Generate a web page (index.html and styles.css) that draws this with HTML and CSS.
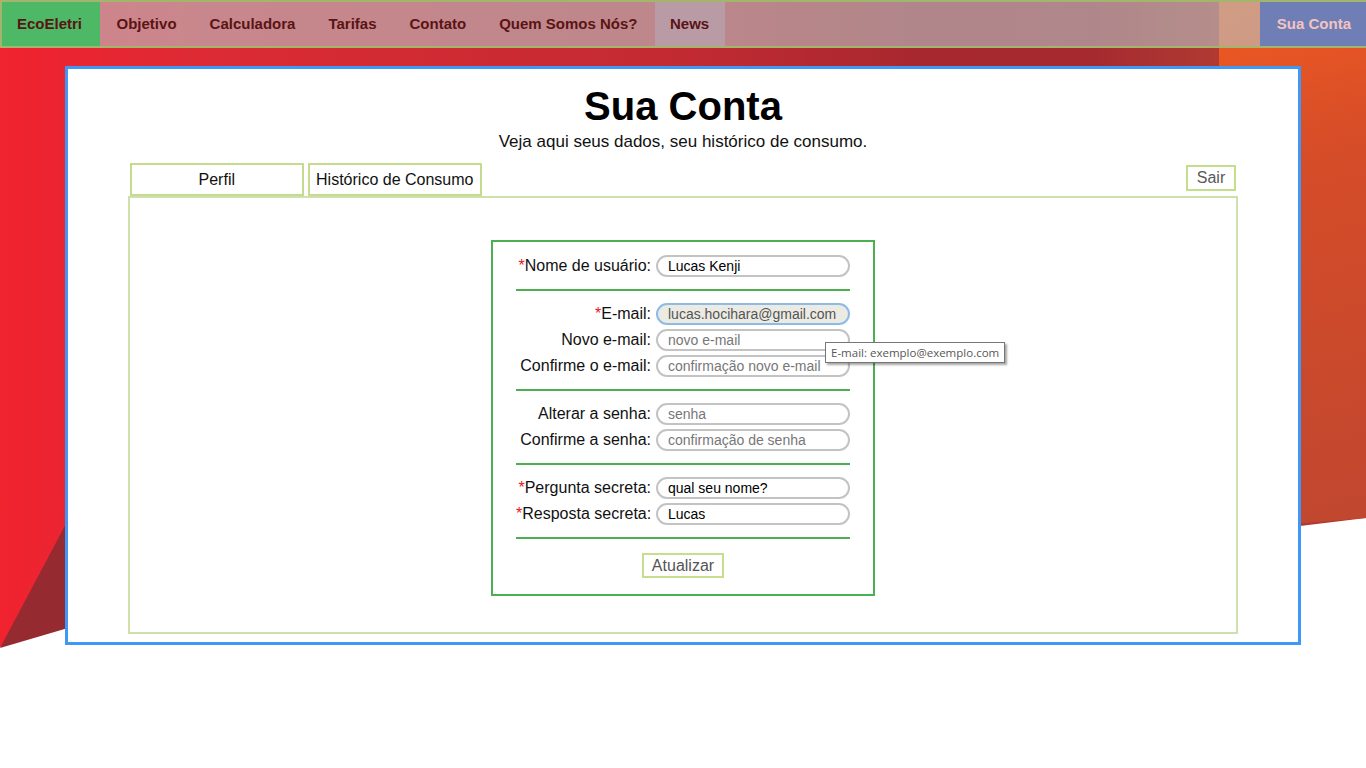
FILE: index.html
```html
<!DOCTYPE html>
<html lang="pt-BR">
<head>
<meta charset="utf-8">
<title>Sua Conta - EcoEletri</title>
<link rel="stylesheet" href="styles.css">
</head>
<body>
<svg class="backdrop" viewBox="0 0 1366 768" preserveAspectRatio="none" aria-hidden="true">
  <defs>
    <linearGradient id="gRed" x1="0" y1="0" x2="1366" y2="0" gradientUnits="userSpaceOnUse">
      <stop offset="0" stop-color="#f0232f"/>
      <stop offset="0.04" stop-color="#ec2431"/>
      <stop offset="0.15" stop-color="#dc2b34"/>
      <stop offset="0.5" stop-color="#c22a32"/>
      <stop offset="0.67" stop-color="#a8282f"/>
      <stop offset="0.8" stop-color="#a52a30"/>
      <stop offset="0.89" stop-color="#b03a32"/>
    </linearGradient>
    <linearGradient id="gOrange" x1="1219" y1="0" x2="1366" y2="500" gradientUnits="userSpaceOnUse">
      <stop offset="0" stop-color="#f05a22"/>
      <stop offset="0.35" stop-color="#d54c28"/>
      <stop offset="1" stop-color="#c2472f"/>
    </linearGradient>
  </defs>
  <polygon points="0,0 1366,0 1366,518 1300,526 66,627 0,647" fill="url(#gRed)"/>
  <polygon points="1219,0 1366,0 1366,518 1219,530" fill="url(#gOrange)"/>
  <polygon points="0,648 68,520 68,628" fill="#952a30"/>
</svg>

<nav class="topnav">
  <a class="nav-link brand" href="#">EcoEletri</a>
  <a class="nav-link" href="#">Objetivo</a>
  <a class="nav-link" href="#">Calculadora</a>
  <a class="nav-link" href="#">Tarifas</a>
  <a class="nav-link" href="#">Contato</a>
  <a class="nav-link" href="#">Quem Somos Nós?</a>
  <a class="nav-link news" href="#">News</a>
  <a class="nav-link account" href="#">Sua Conta</a>
</nav>

<main class="card">
  <h1 class="title">Sua Conta</h1>
  <p class="subtitle">Veja aqui seus dados, seu histórico de consumo.</p>

  <div class="account-box">
    <div class="tabs-row">
      <button class="tab" type="button">Perfil</button>
      <button class="tab" type="button">Histórico de Consumo</button>
      <button class="logout" type="button">Sair</button>
    </div>

    <section class="panel">
      <form class="profile-form">
        <div class="group">
          <label class="label"><span class="req">*</span>Nome de usuário:</label>
          <input class="field" type="text" value="Lucas Kenji">
        </div>
        <div class="sep"></div>
        <div class="group">
          <label class="label"><span class="req">*</span>E-mail:</label>
          <input class="field locked" type="text" value="lucas.hocihara@gmail.com" disabled>
          <label class="label">Novo e-mail:</label>
          <input class="field" type="text" placeholder="novo e-mail">
          <label class="label">Confirme o e-mail:</label>
          <input class="field" type="text" placeholder="confirmação novo e-mail">
        </div>
        <div class="sep"></div>
        <div class="group">
          <label class="label">Alterar a senha:</label>
          <input class="field" type="text" placeholder="senha">
          <label class="label">Confirme a senha:</label>
          <input class="field" type="text" placeholder="confirmação de senha">
        </div>
        <div class="sep"></div>
        <div class="group">
          <label class="label"><span class="req">*</span>Pergunta secreta:</label>
          <input class="field" type="text" value="qual seu nome?">
          <label class="label"><span class="req">*</span>Resposta secreta:</label>
          <input class="field" type="text" value="Lucas">
        </div>
        <div class="sep"></div>
        <div class="actions">
          <button class="submit" type="button">Atualizar</button>
        </div>
      </form>
    </section>
  </div>
</main>

<div class="tooltip">E-mail: exemplo@exemplo.com</div>
</body>
</html>
```

FILE: styles.css
```css
* { box-sizing: border-box; }

html, body {
  margin: 0;
  padding: 0;
}

body {
  position: relative;
  width: 1366px;
  min-height: 768px;
  background: #ffffff;
  font-family: "Liberation Sans", Arial, sans-serif;
  color: #111;
  overflow: hidden;
}

.backdrop {
  position: absolute;
  left: 0;
  top: 0;
  width: 1366px;
  height: 768px;
  z-index: 0;
}

.topnav {
  position: relative;
  z-index: 1;
  display: flex;
  height: 48px;
  border-style: solid;
  border-color: #a3b46c;
  border-width: 2px 0 2px 2px;
  background: rgba(184, 212, 214, 0.55);
}

.nav-link {
  display: block;
  padding: 0 16.5px;
  line-height: 44px;
  font-size: 15px;
  font-weight: bold;
  color: #5a1414;
  text-decoration: none;
  white-space: nowrap;
}

.nav-link.brand {
  background: #4db866;
  padding: 0 18px 0 15px;
}

.nav-link.news {
  background: #b99ba6;
  margin-left: 1px;
  padding: 0 16px 0 15px;
}

.nav-link.account {
  margin-left: auto;
  background: #6f7fb5;
  color: #f3c3c3;
  padding: 0 15px 0 17px;
}

.card {
  position: relative;
  z-index: 1;
  width: 90%;
  margin: 18px auto 0;
  box-sizing: content-box;
  border: 3px solid #3d98f8;
  background: #ffffff;
  padding: 14px 0 8px;
}

.title {
  margin: 0 0 3px;
  font-size: 40px;
  line-height: 46px;
  font-weight: bold;
  text-align: center;
  color: #000;
}

.subtitle {
  margin: 0;
  font-size: 17px;
  line-height: 20px;
  text-align: center;
  color: #111;
}

.account-box {
  width: calc(90% + 4px);
  margin: 11px auto 0;
}

.tabs-row {
  display: flex;
  align-items: flex-start;
  gap: 4px;
  padding: 0 2px;
}

.tab {
  width: 174px;
  height: 33px;
  border: 2px solid #c5dc90;
  background: #fff;
  font-family: "Liberation Sans", Arial, sans-serif;
  font-size: 16px;
  line-height: 28px;
  color: #111;
  padding: 0;
  text-align: center;
}

.logout {
  margin: 2px 0 0 auto;
  height: 26px;
  border: 2px solid #c4df8c;
  background: #fff;
  font-family: "Liberation Sans", Arial, sans-serif;
  font-size: 16px;
  line-height: 18px;
  color: #595959;
  padding: 2px 9px;
}

.panel {
  border: 2px solid #d0e0ac;
  padding: 42px 0 36px;
}

.profile-form {
  width: 384px;
  margin: 0 auto;
  border: 2px solid #4caf50;
  padding: 13px 23px 16px;
}

.group {
  display: grid;
  grid-template-columns: 135px 194px;
  column-gap: 5px;
  row-gap: 4px;
  align-items: center;
}

.label {
  text-align: right;
  font-size: 16px;
  line-height: 18px;
  color: #111;
  white-space: nowrap;
}

.req {
  color: #e8141e;
}

.field {
  width: 194px;
  height: 22px;
  border: 2px solid #c3c3c3;
  border-radius: 11px;
  padding: 0 8px 0 10px;
  font-family: "Liberation Sans", Arial, sans-serif;
  font-size: 14px;
  color: #000;
  background: #fff;
  outline: none;
}

.field::placeholder {
  color: #777;
}

.field.locked {
  background: #ebebe4;
  border-color: #8dbbe8;
  color: #545454;
}

.sep {
  height: 2px;
  background: #4caf50;
  margin: 12px 0;
}

.actions {
  display: flex;
  justify-content: center;
  padding-top: 2px;
}

.submit {
  height: 25px;
  border: 2px solid #c5df8c;
  background: #fff;
  font-family: "Liberation Sans", Arial, sans-serif;
  font-size: 16px;
  line-height: 19px;
  color: #555;
  padding: 1px 8px;
}

.tooltip {
  position: absolute;
  z-index: 2;
  left: 825px;
  top: 342px;
  height: 21px;
  padding: 0 5px;
  border: 1px solid #767676;
  background: #fff;
  box-shadow: 2px 2px 2px rgba(0, 0, 0, 0.35);
  font-family: "Open Sans", "Noto Sans", sans-serif;
  font-size: 11.5px;
  line-height: 19px;
  color: #575757;
  white-space: nowrap;
}
```
